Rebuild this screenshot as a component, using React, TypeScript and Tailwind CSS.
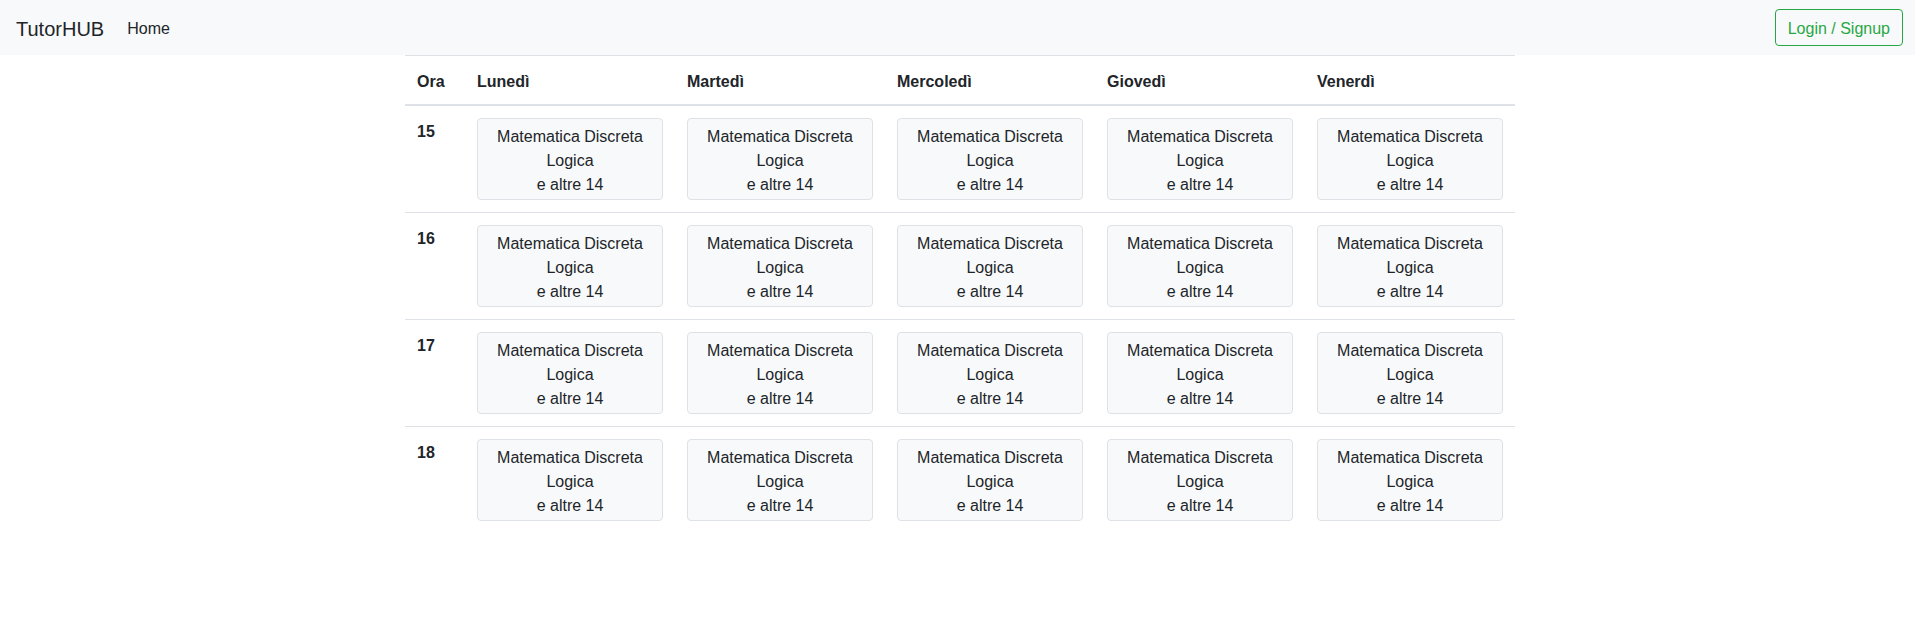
import React from "react";

const days = ["Lunedì", "Martedì", "Mercoledì", "Giovedì", "Venerdì"];
const hours = [15, 16, 17, 18];

function Slot() {
  return (
    <div className="bg-[#f8f9fa] border border-[#dee2e6] rounded pt-[6px] pb-[2px] text-center leading-6">
      <div>Matematica Discreta</div>
      <div>Logica</div>
      <div>e altre 14</div>
    </div>
  );
}

export default function App() {
  return (
    <div className="min-h-[640px] bg-white text-[#212529] text-base font-['Liberation_Sans',Arial,sans-serif]">
      <nav className="h-[55px] bg-[#f8f9fa] flex items-center px-4">
        <span className="text-[20px] leading-[30px] mr-[23px] pt-[2px]">TutorHUB</span>
        <span className="leading-6 pt-[2px]">Home</span>
        <button className="ml-auto mr-[-4px] h-[37px] px-3 pt-[2px] border border-[#28a745] text-[#28a745] rounded leading-6">
          Login / Signup
        </button>
      </nav>

      <div className="w-[1110px] ml-[405px]">
        <div className="flex border-t border-b-2 border-[#dee2e6] font-bold leading-6">
          <div className="w-[60px] px-3 pt-[14px] pb-[10px]">Ora</div>
          {days.map((d) => (
            <div key={d} className="w-[210px] px-3 pt-[14px] pb-[10px]">
              {d}
            </div>
          ))}
        </div>
        {hours.map((h, i) => (
          <div
            key={h}
            className={i < hours.length - 1 ? "flex border-b border-[#dee2e6]" : "flex"}
          >
            <div className="w-[60px] px-3 pt-[14px] pb-[10px] font-bold leading-6">{h}</div>
            {days.map((d) => (
              <div key={d} className="w-[210px] p-3">
                <Slot />
              </div>
            ))}
          </div>
        ))}
      </div>
    </div>
  );
}
